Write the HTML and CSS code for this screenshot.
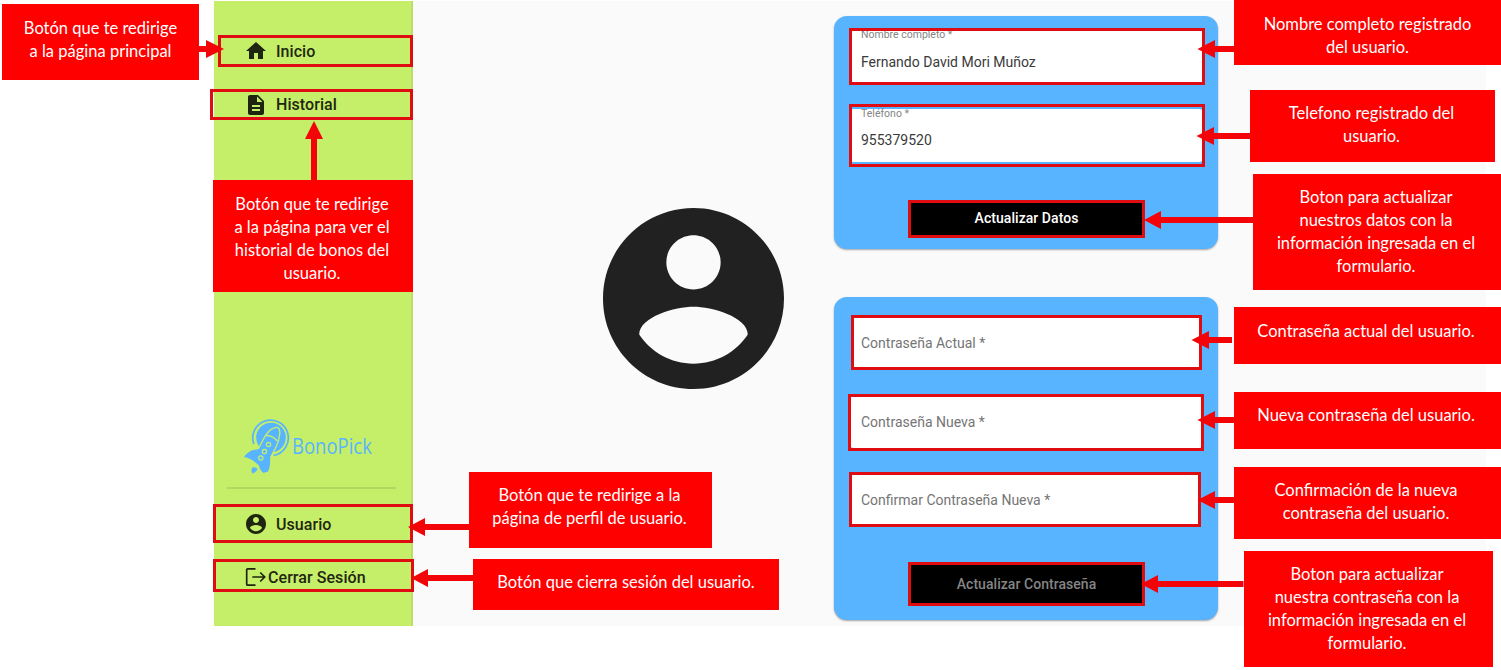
FILE: index.html
```html
<!DOCTYPE html>
<html lang="es">
<head>
<meta charset="utf-8">
<title>BonoPick - Perfil de usuario</title>
<link rel="stylesheet" href="styles.css">
</head>
<body>
<div class="stage">
  <div class="app">
    <aside class="sidebar">
      <nav class="menu menu-top">
        <a class="item"><svg class="icon" viewBox="0 0 24 24"><path d="M10 20v-6h4v6h5v-8h3L12 3 2 12h3v8z"/></svg><span class="item-text">Inicio</span></a>
        <a class="item"><svg class="icon" viewBox="0 0 24 24"><path d="M14 2H6c-1.1 0-1.99.9-1.99 2L4 20c0 1.1.89 2 1.99 2H18c1.1 0 2-.9 2-2V8l-6-6zm2 16H8v-2h8v2zm0-4H8v-2h8v2zm-3-5V3.500L18.500 9H13z"/></svg><span class="item-text">Historial</span></a>
      </nav>
      <div class="brand">
        <svg class="rocket" viewBox="0 0 56 64">
          <circle cx="31" cy="22.500" r="14.800" fill="#59b4ff"/>
          <path d="M13.800 29A17.800 17.800 0 1 1 33.500 40.500" fill="none" stroke="#59b4ff" stroke-width="1.700"/>
          <path d="M37.500 12C32 12 26.500 18 23.500 24L18 34.500C12 34.500 7 37.500 4 42c4.500 1 8 2.500 11.500 5.500l3.500 3c.5 3 2 5.500 4.500 7.500L28 56.500c2-4 2.500-9 2-13L36 32c3.500-7 6-19 1.500-20z" fill="#59b4ff"/>
          <path d="M18.500 33.500L23.500 24C26.500 18 32 12 37 12.300c5 .7 2.500 12.700-1 19.700l-5.500 10.500M25.800 20.500c4-.2 8.500 2 11.700 5.500" fill="none" stroke="#c5ef68" stroke-width="1.300"/>
          <g fill="#59b4ff" stroke="#c5ef68" stroke-width="1.200"><circle cx="28.500" cy="29.500" r="2.100"/><circle cx="24.500" cy="36.500" r="2.100"/><circle cx="20.800" cy="43" r="2.100"/></g>
          <path d="M12.500 52.500c-1.500 1.500-1.200 4-.2 6 2.500-.8 4.700-2.500 5.200-4.500-1.500-1.500-3.500-2-5-1.500z" fill="#59b4ff"/>
        </svg>
        <span class="brand-name">BonoPick</span>
      </div>
      <div class="divider"></div>
      <nav class="menu menu-bottom">
        <a class="item"><svg class="icon" viewBox="0 0 24 24"><path d="M12 2C6.480 2 2 6.480 2 12s4.480 10 10 10 10-4.480 10-10S17.520 2 12 2zm0 3c1.660 0 3 1.340 3 3s-1.340 3-3 3-3-1.340-3-3 1.340-3 3-3zm0 14.200c-2.500 0-4.710-1.280-6-3.220.03-1.990 4-3.080 6-3.080 1.990 0 5.970 1.090 6 3.080-1.290 1.940-3.500 3.220-6 3.220z"/></svg><span class="item-text">Usuario</span></a>
        <a class="item logout"><svg class="icon" viewBox="0 0 24 24"><path d="M11.500 3.800H3.700q-1 0-1 1v14.400q0 1 1 1h7.800M8.300 12H20.500M16.200 7.500l4.500 4.500-4.500 4.500" fill="none" stroke="#1f2610" stroke-width="1.700"/></svg><span class="item-text">Cerrar Sesión</span></a>
      </nav>
    </aside>
    <main class="content">
      <svg class="avatar" viewBox="2 2 20 20"><path d="M12 2C6.480 2 2 6.480 2 12s4.480 10 10 10 10-4.480 10-10S17.520 2 12 2zm0 3c1.660 0 3 1.340 3 3s-1.340 3-3 3-3-1.340-3-3 1.340-3 3-3zm0 14.200c-2.500 0-4.710-1.280-6-3.220.03-1.990 4-3.080 6-3.080 1.990 0 5.970 1.090 6 3.080-1.290 1.940-3.500 3.220-6 3.220z"/></svg>
      <div class="cards">
        <section class="card card-data">
          <div class="field filled"><span class="label">Nombre completo *</span><span class="value">Fernando David Mori Muñoz</span></div>
          <div class="field filled"><span class="label">Teléfono *</span><span class="value">955379520</span></div>
          <div class="button">Actualizar Datos</div>
        </section>
        <section class="card card-password">
          <div class="field field-current">Contraseña Actual *</div>
          <div class="field">Contraseña Nueva *</div>
          <div class="field field-confirm">Confirmar Contraseña Nueva *</div>
          <div class="button disabled">Actualizar Contraseña</div>
        </section>
      </div>
    </main>
  </div>

  <div class="frame f-home"></div>
  <div class="frame f-history"></div>
  <div class="frame f-user"></div>
  <div class="frame f-logout"></div>
  <div class="frame f-name"></div>
  <div class="frame f-phone"></div>
  <div class="frame f-save"></div>
  <div class="frame f-current"></div>
  <div class="frame f-new"></div>
  <div class="frame f-confirm"></div>
  <div class="frame f-change"></div>

  <div class="note n-home">Botón que te redirige<br>a la página principal</div>
  <div class="note n-history">Botón que te redirige<br>a la página para ver el<br>historial de bonos del<br>usuario.</div>
  <div class="note n-user">Botón que te redirige a la<br>página de perfil de usuario.</div>
  <div class="note n-logout">Botón que cierra sesión del usuario.</div>
  <div class="note n-name">Nombre completo registrado<br>del usuario.</div>
  <div class="note n-phone">Telefono registrado del<br>usuario.</div>
  <div class="note n-save">Boton para actualizar<br>nuestros datos con la<br>información ingresada en el<br>formulario.</div>
  <div class="note n-current">Contraseña actual del usuario.</div>
  <div class="note n-new">Nueva contraseña del usuario.</div>
  <div class="note n-confirm">Confirmación de la nueva<br>contraseña del usuario.</div>
  <div class="note n-change">Boton para actualizar<br>nuestra contraseña con la<br>información ingresada en el<br>formulario.</div>

  <svg class="arrows" viewBox="0 0 1501 670">
    <path d="M198 46h8v-6l18 9-18 9v-6h-8z"/>
    <path d="M311 181v-42h-6l9-18 9 18h-6v42z"/>
    <path d="M470 524h-45v-6l-17 9 17 9v-6h45z"/>
    <path d="M474 575h-46v-6l-17 9 17 9v-6h46z"/>
    <path d="M1235 46h-20v-6l-17.500 9 17.500 9v-6h20z"/>
    <path d="M1251 133h-37v-6l-17.500 9 17.500 9v-6h37z"/>
    <path d="M1254 217h-93v-6l-17 9 17 9v-6h93z"/>
    <path d="M1232 337h-23v-6l-17.500 9 17.500 9v-6h23z"/>
    <path d="M1235 417h-20v-6l-17.500 9 17.500 9v-6h20z"/>
    <path d="M1235 497h-20v-6l-17.500 9 17.500 9v-6h20z"/>
    <path d="M1243.500 581h-85.500v-6l-17 9 17 9v-6h85.500z"/>
  </svg>
</div>
</body>
</html>
```

FILE: styles.css
```css
* { box-sizing: border-box; }
body { margin: 0; background: #fff; font-family: Roboto, "Liberation Sans", sans-serif; }
.stage { position: relative; width: 1501px; height: 670px; overflow: hidden; padding: 1px 15px 44px 214px; }
.app { display: flex; height: 625px; background: #fafafa; }

.sidebar { display: flex; flex-direction: column; width: 199px; padding-top: 34px; background: #c5ef68; border-right: 2px solid #b9df69; }
.menu { display: flex; flex-direction: column; }
.menu-top { gap: 21.500px; }
.menu-bottom { gap: 21px; margin-top: 18.500px; }
.item { display: flex; align-items: center; gap: 8px; height: 32px; padding-left: 30px; color: #1f2610; font-size: 16px; font-weight: 500; letter-spacing: 0.060px; white-space: nowrap; }
.logout { gap: 0; }
.icon { width: 24px; height: 24px; fill: #1f2610; flex: none; }
.brand { display: flex; align-items: center; height: 64px; margin-top: 294.500px; padding-left: 26px; }
.rocket { width: 56px; height: 64px; flex: none; }
.brand-name { margin: -3px 0 0 -4px; color: #59b4ff; font-family: "Open Sans", sans-serif; font-size: 21.500px; line-height: 28px; white-space: nowrap; transform: scaleX(0.860); transform-origin: left center; }
.divider { height: 2px; margin: 8px 15px 0 13px; background: #b2d85f; }
.menu-bottom .item-text { padding-top: 1px; }

.content { display: flex; align-items: flex-start; flex: 1; }
.avatar { width: 181px; height: 181px; margin: 207.300px 50px 0 190px; fill: #212121; flex: none; }
.cards { display: flex; flex-direction: column; gap: 48px; width: 384px; padding-top: 15px; }
.card { display: flex; flex-direction: column; gap: 25.500px; padding: 14px 15px 0 16px; border-radius: 13px; background: #59b4ff; box-shadow: 0 1px 2px rgba(0, 0, 0, 0.350); }
.card-data { height: 233px; }
.card-password { height: 323px; padding-top: 19px; }
.field { display: flex; align-items: center; position: relative; height: 53px; padding: 1px 11px 0; border-radius: 4px; background: #fff; color: #757575; font-size: 14px; letter-spacing: 0; white-space: nowrap; }
.field-current { margin: 0 2px; padding-left: 9px; }
.field-confirm { margin-right: 3px; }
.filled { color: #3a3a3a; padding-top: 10px; }
.label { position: absolute; left: 11px; top: -2px; color: #858585; font-size: 10.500px; line-height: 14px; }
.button { display: flex; align-items: center; justify-content: center; align-self: center; width: 232px; height: 34px; margin-top: 14px; background: #000; color: #fff; font-size: 14px; font-weight: 500; letter-spacing: 0.050px; white-space: nowrap; }
.disabled { height: 41px; margin-top: 12px; color: #858585; }

/* Annotation layer drawn over the application */
.frame { position: absolute; border: 3px solid #df0d12; }
.f-home { left: 218px; top: 35px; width: 195px; height: 32px; }
.f-history { left: 210px; top: 89px; width: 203px; height: 31px; }
.f-user { left: 213px; top: 504px; width: 200px; height: 39px; }
.f-logout { left: 213px; top: 559px; width: 201px; height: 33px; }
.f-name { left: 849px; top: 28px; width: 356px; height: 57px; }
.f-phone { left: 849px; top: 104px; width: 356px; height: 63px; }
.f-save { left: 908px; top: 200px; width: 237px; height: 38px; }
.f-current { left: 851px; top: 315px; width: 351px; height: 55px; }
.f-new { left: 848px; top: 394px; width: 356px; height: 57px; }
.f-confirm { left: 849px; top: 472px; width: 352px; height: 55px; }
.f-change { left: 908px; top: 562px; width: 237px; height: 44px; }

.note { position: absolute; padding-top: 12.600px; background: #f00; color: #fff; font-family: Lato, sans-serif; font-size: 16.500px; line-height: 23.300px; text-align: center; white-space: nowrap; }
.n-home { left: 2px; top: 4px; width: 197px; height: 76px; }
.n-history { left: 213px; top: 180px; width: 200px; height: 112px; padding-right: 2px; }
.n-user { left: 469px; top: 472px; width: 243px; height: 76px; padding-top: 11.600px; padding-right: 2px; }
.n-logout { left: 473px; top: 559px; width: 306px; height: 51px; padding-top: 11.600px; }
.n-name { left: 1234px; top: 0; width: 267px; height: 65px; }
.n-phone { left: 1250px; top: 90px; width: 245px; height: 72px; padding-top: 11.600px; padding-right: 2px; }
.n-save { left: 1253px; top: 174px; width: 248px; height: 116px; padding-top: 11.600px; padding-right: 2px; }
.n-current { left: 1234px; top: 307px; width: 267px; height: 57px; padding-right: 3px; }
.n-new { left: 1234px; top: 392px; width: 267px; height: 57px; padding-top: 11.600px; padding-right: 3px; }
.n-confirm { left: 1234px; top: 467px; width: 267px; height: 72px; padding-top: 11.600px; padding-right: 3px; }
.n-change { left: 1244px; top: 551px; width: 249px; height: 116px; padding-top: 11.600px; padding-right: 3px; }
.arrows { position: absolute; left: 0; top: 0; width: 1501px; height: 670px; fill: #f20408; }
```
